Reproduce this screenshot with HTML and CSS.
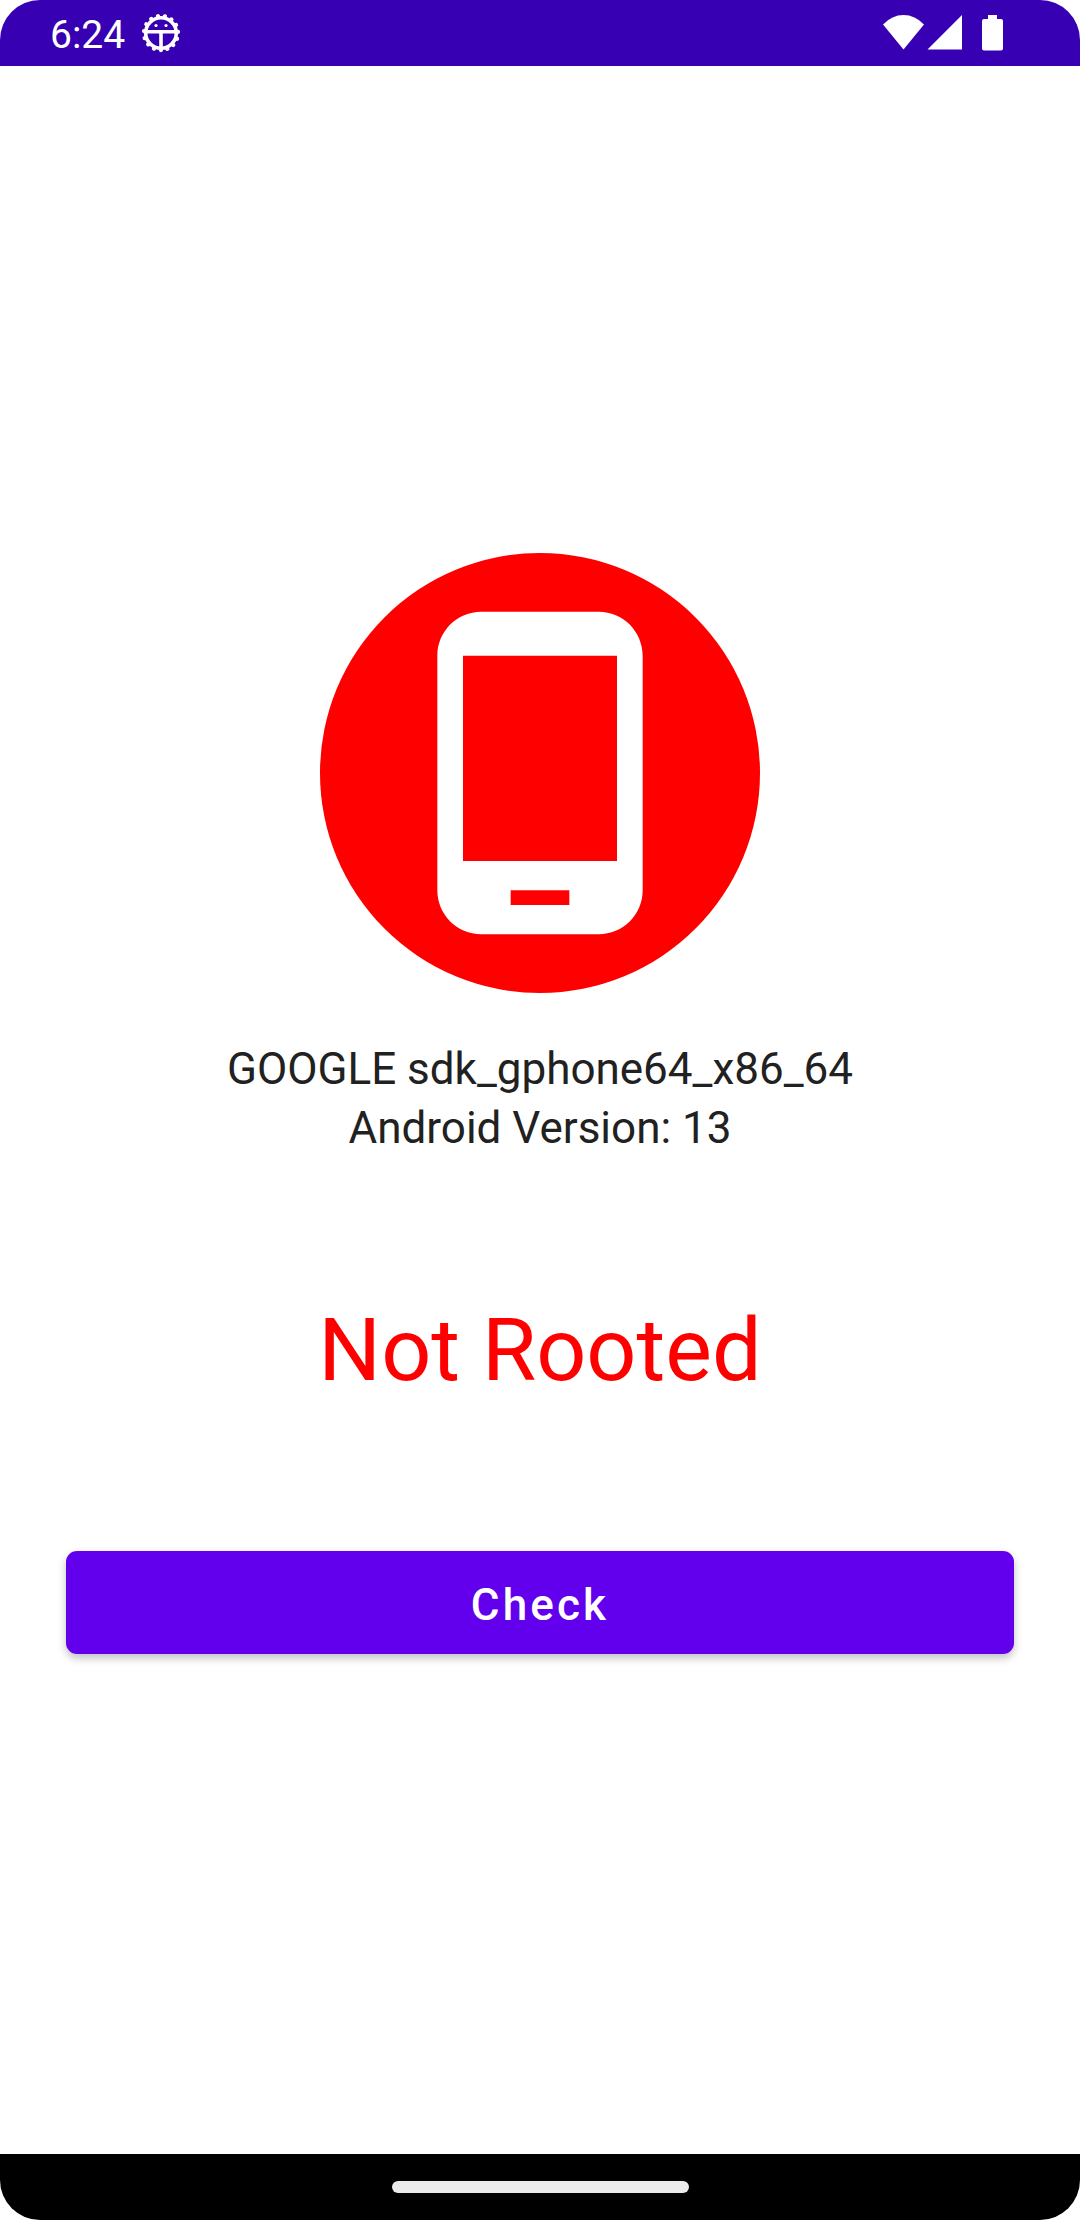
FILE: index.html
```html
<!DOCTYPE html>
<html lang="en">
<head>
<meta charset="utf-8">
<title>Root Checker</title>
<link rel="stylesheet" href="styles.css">
</head>
<body>
<div class="screen">
  <header class="status-bar">
    <span class="clock">6:24</span>
    <svg class="debug-icon" viewBox="0 0 40 40">
      <circle cx="20" cy="20" r="15.300" fill="none" stroke="#fff" stroke-width="3.600"/>
      <circle cx="20" cy="20" r="17.100" transform="rotate(90 20 20)" fill="none" stroke="#fff" stroke-width="4.200" stroke-linecap="round" stroke-dasharray="0.1 7.063"/>
      <path d="M5 18.700h30M20 18.700v17" fill="none" stroke="#fff" stroke-width="3.600"/>
      <circle cx="15" cy="12.500" r="1.600" fill="#fff"/>
      <circle cx="25" cy="12.500" r="1.600" fill="#fff"/>
    </svg>
    <svg class="status-icons" viewBox="0 0 122 40">
      <path d="M0 11.500Q9 2 20.500 2T41 11.500L20.500 36.500Z"/>
      <path d="M44.500 36.500L79 2V36.500Z"/>
      <path d="M105 2h9v4h4a2 2 0 0 1 2 2v27.500a2 2 0 0 1-2 2h-17a2 2 0 0 1-2-2V8a2 2 0 0 1 2-2h4z"/>
    </svg>
  </header>
  <main class="content">
    <svg class="device" viewBox="0 0 30 30">
      <circle cx="15" cy="15" r="15" fill="#f00"/>
      <path transform="translate(3 3)" fill="#fff" d="M16 1H8C6.340 1 5 2.340 5 4v16c0 1.660 1.340 3 3 3h8c1.660 0 3-1.340 3-3V4c0-1.660-1.340-3-3-3zm-2 20h-4v-1h4v1zm3.250-3H6.750V4h10.500v14z"/>
    </svg>
    <p class="info">GOOGLE sdk_gphone64_x86_64<br>Android Version: 13</p>
    <p class="result">Not Rooted</p>
    <button class="check">Check</button>
  </main>
  <footer class="nav-bar"><div class="handle"></div></footer>
</div>
</body>
</html>
```
FILE: styles.css
```css
body {
  margin: 0;
  background: #fff;
  font-family: Roboto, sans-serif;
}
.screen {
  display: flex;
  flex-direction: column;
  width: 1080px;
  height: 2220px;
  border-radius: 40px;
  overflow: hidden;
}
.status-bar {
  display: flex;
  align-items: center;
  box-sizing: border-box;
  height: 66px;
  padding: 0 75px 0 50px;
  background: #3700b3;
  color: #fff;
}
.clock {
  font-size: 39px;
  line-height: 46px;
  padding-top: 4px;
}
.debug-icon {
  width: 40px;
  height: 40px;
  margin-left: 16px;
}
.status-icons {
  width: 122px;
  height: 40px;
  margin-left: auto;
  fill: #fff;
}
.content {
  flex: 1;
  display: flex;
  flex-direction: column;
  align-items: center;
  padding: 487px 66px 0;
}
.device {
  width: 440px;
  height: 440px;
}
.info {
  margin: 47px 0 0;
  font-size: 44px;
  line-height: 59px;
  text-align: center;
  color: #212121;
}
.result {
  margin: 140px 0 0;
  font-size: 88px;
  line-height: 104px;
  color: #f00;
}
.check {
  align-self: stretch;
  height: 103px;
  margin: 149px 0 0;
  padding: 4px 0 0;
  border: 0;
  border-radius: 11px;
  background: #6200ee;
  box-shadow: 0 4px 8px rgba(0, 0, 0, 0.25);
  color: #fff;
  font: 500 44px/52px Roboto, sans-serif;
  letter-spacing: 3.14px;
}
.nav-bar {
  display: flex;
  align-items: center;
  justify-content: center;
  height: 66px;
  background: #000;
}
.handle {
  width: 297px;
  height: 12px;
  border-radius: 6px;
  background: #ebebeb;
}
```
